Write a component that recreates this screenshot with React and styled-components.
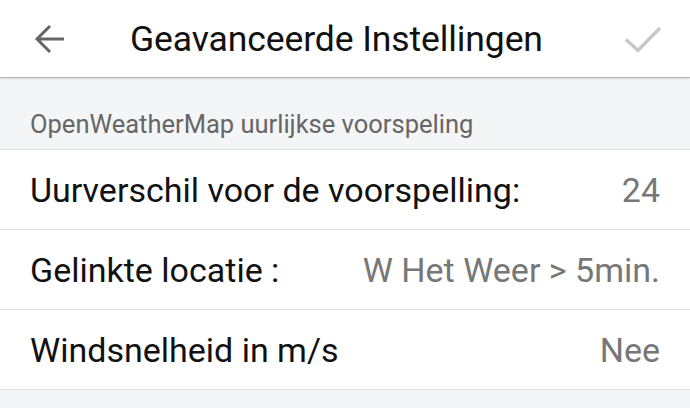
import React from 'react';
import styled, { createGlobalStyle } from 'styled-components';

const GlobalStyle = createGlobalStyle`
  html, body {
    margin: 0;
    padding: 0;
    background: #f4f5f7;
    font-family: Roboto, "Noto Sans", sans-serif;
  }
`;

const rows = [
  { label: 'Uurverschil voor de voorspelling:', value: '24' },
  { label: 'Gelinkte locatie :', value: 'W Het Weer > 5min.' },
  { label: 'Windsnelheid in m/s', value: 'Nee' },
];

const App = () => {
  return (
    <Page>
      <GlobalStyle />
      <Header>
        <IconButton aria-label="terug">
          <svg width="32" height="32" viewBox="0 0 32 32">
            <path d="M30 16H4M16 3L3 16l13 13" fill="none" stroke="#666" strokeWidth="3" />
          </svg>
        </IconButton>
        <Title>Geavanceerde Instellingen</Title>
        <IconButton aria-label="opslaan">
          <svg width="38" height="30" viewBox="0 0 38 30">
            <path d="M2 15.5l12 11L36 4" fill="none" stroke="#c8c8c8" strokeWidth="3.4" />
          </svg>
        </IconButton>
      </Header>
      <SectionHeader>OpenWeatherMap uurlijkse voorspeling</SectionHeader>
      <List>
        {rows.map((row) => (
          <Row key={row.label}>
            <Label>{row.label}</Label>
            <Value>{row.value}</Value>
          </Row>
        ))}
      </List>
    </Page>
  );
};

export default App;

const Page = styled.div`
  width: 690px;
  height: 408px;
  overflow: hidden;
  background: #f4f5f7;
`;

const Header = styled.div`
  height: 78px;
  display: flex;
  align-items: center;
  padding: 0 28px 0 34px;
  background: #fff;
  border-bottom: 1px solid #b5b5b5;
  box-sizing: border-box;
  box-shadow: 0 1px 2px rgba(0, 0, 0, 0.12);
  position: relative;
`;

const IconButton = styled.div`
  display: flex;
  align-items: center;
  justify-content: center;
`;

const Title = styled.div`
  flex: 1;
  margin-left: 64px;
  font-size: 35.5px;
  letter-spacing: -0.1px;
  color: #111;
`;

const SectionHeader = styled.div`
  height: 72px;
  box-sizing: border-box;
  display: flex;
  align-items: flex-end;
  padding: 0 30px 10px;
  font-size: 25.5px;
  color: #666;
  border-bottom: 1px solid #e2e2e2;
`;

const List = styled.div`
  background: #fff;
`;

const Row = styled.div`
  height: 80px;
  box-sizing: border-box;
  display: flex;
  align-items: center;
  justify-content: space-between;
  padding: 0 30px;
  border-bottom: 1px solid #e2e2e2;
`;

const Label = styled.div`
  font-size: 34px;
  color: #111;
`;

const Value = styled.div`
  font-size: 34px;
  color: #777;
`;
